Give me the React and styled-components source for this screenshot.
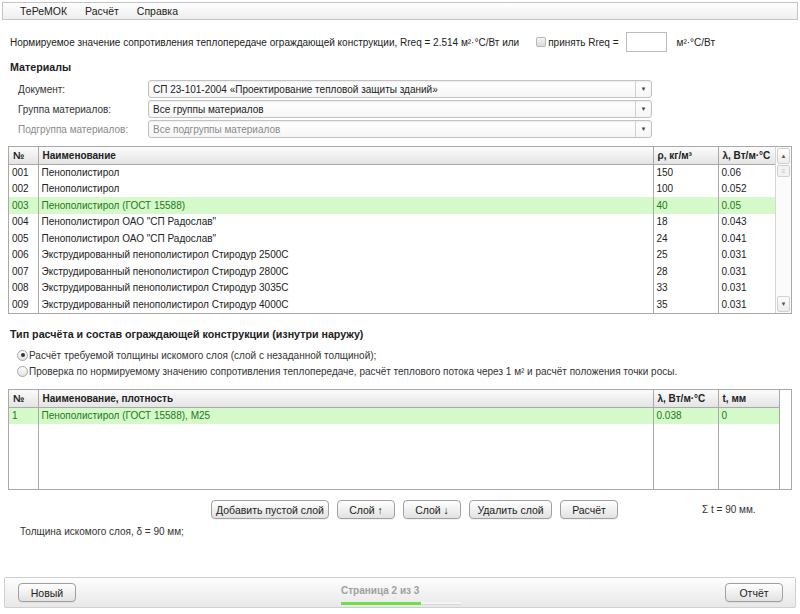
import React from "react";
import styled, { createGlobalStyle } from "styled-components";

const Global = createGlobalStyle`
  html, body { margin: 0; padding: 0; background: #fff; }
  body { font-family: "Liberation Sans", Arial, sans-serif; font-size: 10px; color: #222; }
  * { box-sizing: border-box; }
`;

const Page = styled.div`
  width: 800px;
  height: 614px;
  display: flex;
  flex-direction: column;
  overflow: hidden;
`;

const MenuBar = styled.div`
  margin: 2px 2px 0 2px;
  height: 18px;
  border: 1px solid #c4c4c4;
  background: linear-gradient(#ffffff, #eeeeee);
  display: flex;
  align-items: center;
  padding-left: 17px;
  gap: 18px;
  font-size: 10.5px;
  color: #222;
`;

const MenuItem = styled.span``;

const RreqLine = styled.div`
  margin-top: 12px;
  height: 20px;
  padding-left: 10px;
  display: flex;
  align-items: center;
  color: #222;
`;

const Check = styled.span`
  display: inline-block;
  width: 10px;
  height: 10px;
  border: 1px solid #b8b8b8;
  border-radius: 2px;
  background: linear-gradient(#f4f4f4, #dcdcdc);
  margin-left: 17px;
  margin-right: 2px;
`;

const SmallInput = styled.span`
  display: inline-block;
  width: 41px;
  height: 20px;
  border: 1px solid #bcbcbc;
  background: #fff;
  margin: 0 10px 0 7px;
`;

const SectionTitle = styled.div`
  font-weight: bold;
  font-size: 10.7px;
  padding-left: 10px;
  margin-top: ${(p) => p.$mt || 0}px;
  height: 14px;
  line-height: 14px;
`;

const FormGrid = styled.div`
  display: grid;
  grid-template-columns: 130px 504px;
  grid-auto-rows: 18px;
  row-gap: 2px;
  margin-top: 6px;
  padding-left: 18px;
`;

const Label = styled.div`
  display: flex;
  align-items: center;
  color: ${(p) => (p.$muted ? "#8a8a8a" : "#333")};
`;

const Select = styled.div`
  display: flex;
  border: 1px solid #c2c2c2;
  border-radius: 3px;
  background: linear-gradient(#ffffff, #f6f6f6);
  box-shadow: inset 0 1px 2px rgba(0, 0, 0, 0.08);
  color: ${(p) => (p.$muted ? "#8a8a8a" : "#222")};
`;

const SelectText = styled.div`
  flex: 1;
  display: flex;
  align-items: center;
  padding-left: 4px;
  white-space: nowrap;
  overflow: hidden;
`;

const SelectArrow = styled.div`
  width: 16px;
  border-left: 1px solid #d0d0d0;
  display: flex;
  align-items: center;
  justify-content: center;
  font-size: 6px;
  color: #444;
`;

const GridWrap = styled.div`
  margin: ${(p) => p.$mt}px 8px 0 8px;
  border: 1px solid #a9a9a9;
  display: flex;
  height: ${(p) => p.$h}px;
  background: #fff;
`;

const Table = styled.table`
  border-collapse: collapse;
  table-layout: fixed;
  width: ${(p) => p.$w}px;
  ${(p) => (p.$rb ? "border-right: 1px solid #a9a9a9;" : "")}
  height: max-content;
  align-self: flex-start;
`;

const Th = styled.th`
  height: 17px;
  text-align: left;
  font-weight: bold;
  padding: 0 4px;
  background: linear-gradient(#fbfbfb, #e4e4e4);
  border-bottom: 1px solid #a9a9a9;
  border-right: 1px solid #a9a9a9;
  white-space: nowrap;
  overflow: hidden;
  &:last-child { border-right: none; }
`;

const Td = styled.td`
  height: ${(p) => p.$h || 16.5}px;
  padding: 0 3px;
  border-right: 1px solid #a9a9a9;
  white-space: nowrap;
  overflow: hidden;
  vertical-align: middle;
  &:last-child { border-right: none; }
`;

const Tr = styled.tr`
  background: ${(p) => (p.$sel ? "#d5f9c9" : "#fff")};
  color: ${(p) => (p.$sel ? "#217a1a" : "#222")};
`;

const Scrollbar = styled.div`
  width: 17px;
  border-left: 1px solid #d6d6d6;
  display: flex;
  flex-direction: column;
  background: #fbfbfb;
`;

const ScrollBtn = styled.div`
  height: 16px;
  display: flex;
  align-items: center;
  justify-content: center;
  font-size: 6px;
  color: #555;
  border: 1px solid #d0d0d0;
  border-radius: 2px;
  background: linear-gradient(#ffffff, #ececec);
  margin: 1px;
`;

const Thumb = styled.div`
  height: 12px;
  margin: 0 1px;
  border: 1px solid #d0d0d0;
  border-radius: 2px;
  background: #f2f2f2;
  display: flex;
  align-items: center;
  justify-content: center;
  font-size: 6px;
  color: #bbb;
`;

const Track = styled.div`
  flex: 1;
`;

const RadioRow = styled.div`
  display: flex;
  align-items: center;
  padding-left: 17px;
  height: 16px;
  margin-top: ${(p) => p.$mt || 0}px;
  color: #333;
`;

const Radio = styled.span`
  width: 11px;
  height: 11px;
  border-radius: 50%;
  border: 1px solid #a8a8a8;
  background: linear-gradient(#fdfdfd, #e2e2e2);
  margin-right: 1px;
  display: flex;
  align-items: center;
  justify-content: center;
  &::after {
    content: "";
    width: 4px;
    height: 4px;
    border-radius: 50%;
    background: ${(p) => (p.$on ? "#333" : "transparent")};
  }
`;

const ButtonRow = styled.div`
  display: flex;
  align-items: center;
  margin-top: 10px;
  padding-left: 211px;
  gap: 8px;
  height: 19px;
`;

const Button = styled.button`
  font-family: "Liberation Sans", Arial, sans-serif;
  font-size: 10.5px;
  color: #222;
  height: 19px;
  width: ${(p) => p.$w}px;
  padding: 0;
  border: 1px solid #a0a0a0;
  border-radius: 4px;
  background: linear-gradient(#ffffff, #e2e2e2);
  box-shadow: 0 1px 0 rgba(0, 0, 0, 0.05);
  ${(p) => (p.$push ? "margin-left: auto;" : "")}
`;

const Sum = styled.span`
  margin-left: 76px;
  color: #333;
`;

const Result = styled.div`
  padding-left: 20px;
  margin-top: 6px;
  height: 14px;
  line-height: 14px;
  color: #333;
`;

const Footer = styled.div`
  margin: auto 4px 6px 4px;
  height: 31px;
  border: 1px solid #cfcfcf;
  border-radius: 2px;
  background: linear-gradient(#fdfdfd, #e8e8e8);
  display: flex;
  align-items: center;
  padding: 0 12px 0 13px;
`;

const Pager = styled.div`
  display: flex;
  flex-direction: column;
  width: 120px;
  margin-left: 265px;
  padding-top: 4px;
`;

const PagerText = styled.div`
  color: #a0a0a0;
  font-weight: bold;
  height: 14px;
`;

const Progress = styled.div`
  margin-top: 3px;
  height: 3px;
  background: #f4f4f4;
  border-bottom: 1px solid #d8d8d8;
`;

const ProgressFill = styled.div`
  height: 3px;
  background: #6ee04a;
`;

const materials = [
  ["001", "Пенополистирол", "150", "0.06"],
  ["002", "Пенополистирол", "100", "0.052"],
  ["003", "Пенополистирол (ГОСТ 15588)", "40", "0.05", true],
  ["004", "Пенополистирол ОАО \"СП Радослав\"", "18", "0.043"],
  ["005", "Пенополистирол ОАО \"СП Радослав\"", "24", "0.041"],
  ["006", "Экструдированный пенополистирол Стиродур 2500C", "25", "0.031"],
  ["007", "Экструдированный пенополистирол Стиродур 2800C", "28", "0.031"],
  ["008", "Экструдированный пенополистирол Стиродур 3035C", "33", "0.031"],
  ["009", "Экструдированный пенополистирол Стиродур 4000C", "35", "0.031"],
];

export default function App() {
  return (
    <Page>
      <Global />
      <MenuBar>
        <MenuItem>ТеРеМОК</MenuItem>
        <MenuItem>Расчёт</MenuItem>
        <MenuItem>Справка</MenuItem>
      </MenuBar>

      <RreqLine>
        Нормируемое значение сопротивления теплопередаче ограждающей конструкции, Rreq = 2.514 м²·°С/Вт или
        <Check />
        принять Rreq =
        <SmallInput />
        м²·°С/Вт
      </RreqLine>

      <SectionTitle $mt={8}>Материалы</SectionTitle>
      <FormGrid>
        <Label>Документ:</Label>
        <Select>
          <SelectText>СП 23-101-2004 «Проектирование тепловой защиты зданий»</SelectText>
          <SelectArrow>▼</SelectArrow>
        </Select>
        <Label>Группа материалов:</Label>
        <Select>
          <SelectText>Все группы материалов</SelectText>
          <SelectArrow>▼</SelectArrow>
        </Select>
        <Label $muted>Подгруппа материалов:</Label>
        <Select $muted>
          <SelectText>Все подгруппы материалов</SelectText>
          <SelectArrow>▼</SelectArrow>
        </Select>
      </FormGrid>

      <GridWrap $mt={8} $h={168}>
        <Table $w={766}>
          <colgroup>
            <col style={{ width: 29 }} />
            <col style={{ width: 615 }} />
            <col style={{ width: 65 }} />
            <col style={{ width: 57 }} />
          </colgroup>
          <thead>
            <tr>
              <Th>№</Th>
              <Th>Наименование</Th>
              <Th>ρ, кг/м³</Th>
              <Th>λ, Вт/м·°С</Th>
            </tr>
          </thead>
          <tbody>
            {materials.map((m) => (
              <Tr key={m[0]} $sel={m[4]}>
                <Td>{m[0]}</Td>
                <Td>{m[1]}</Td>
                <Td>{m[2]}</Td>
                <Td>{m[3]}</Td>
              </Tr>
            ))}
          </tbody>
        </Table>
        <Scrollbar>
          <ScrollBtn>▲</ScrollBtn>
          <Thumb>≡</Thumb>
          <Track />
          <ScrollBtn>▼</ScrollBtn>
        </Scrollbar>
      </GridWrap>

      <SectionTitle $mt={13}>Тип расчёта и состав ограждающей конструкции (изнутри наружу)</SectionTitle>
      <RadioRow $mt={6}>
        <Radio $on />
        Расчёт требуемой толщины искомого слоя (слой с незаданной толщиной);
      </RadioRow>
      <RadioRow>
        <Radio />
        Проверка по нормируемому значению сопротивления теплопередаче, расчёт теплового потока через 1 м² и расчёт положения точки росы.
      </RadioRow>

      <GridWrap $mt={10} $h={101}>
        <Table $w={770} $rb>
          <colgroup>
            <col style={{ width: 29 }} />
            <col style={{ width: 615 }} />
            <col style={{ width: 65 }} />
            <col style={{ width: 61 }} />
          </colgroup>
          <thead>
            <tr>
              <Th>№</Th>
              <Th>Наименование, плотность</Th>
              <Th>λ, Вт/м·°С</Th>
              <Th>t, мм</Th>
            </tr>
          </thead>
          <tbody>
            <Tr $sel>
              <Td $h={17}>1</Td>
              <Td $h={17}>Пенополистирол (ГОСТ 15588), М25</Td>
              <Td $h={17}>0.038</Td>
              <Td $h={17}>0</Td>
            </Tr>
            <Tr>
              <Td $h={65} />
              <Td $h={65} />
              <Td $h={65} />
              <Td $h={65} />
            </Tr>
          </tbody>
        </Table>
      </GridWrap>

      <ButtonRow>
        <Button $w={118}>Добавить пустой слой</Button>
        <Button $w={58}>Слой ↑</Button>
        <Button $w={58}>Слой ↓</Button>
        <Button $w={83}>Удалить слой</Button>
        <Button $w={58}>Расчёт</Button>
        <Sum>Σ t = 90 мм.</Sum>
      </ButtonRow>

      <Result>Толщина искомого слоя, δ = 90 мм;</Result>

      <Footer>
        <Button $w={58}>Новый</Button>
        <Pager>
          <PagerText>Страница 2 из 3</PagerText>
          <Progress>
            <ProgressFill style={{ width: `${(2 / 3) * 100}%` }} />
          </Progress>
        </Pager>
        <Button $w={58} $push>Отчёт</Button>
      </Footer>
    </Page>
  );
}
